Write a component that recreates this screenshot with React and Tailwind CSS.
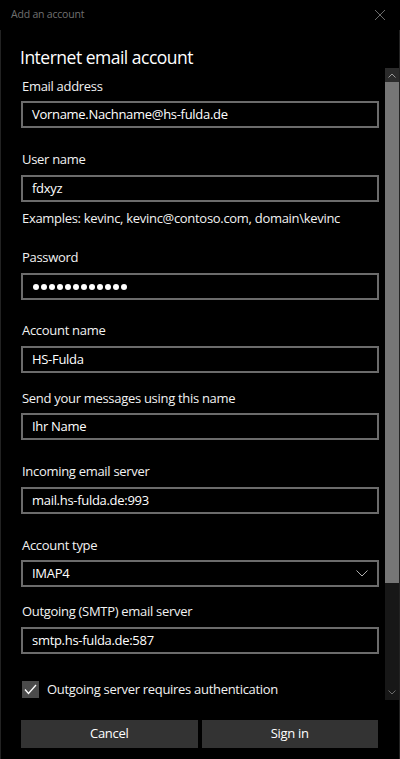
import React from 'react';

const font = { fontFamily: '"Open Sans", "Noto Sans", sans-serif' };

function Label({ children, className = '' }) {
    return (
        <div className={`h-[18px] text-[13px] leading-[18px] tracking-[-0.3px] text-[#f2f2f2] pl-[1px] ${className}`}>
            {children}
        </div>
    );
}

function Field({ value, className = '' }) {
    return (
        <div className={`h-[27px] border-2 border-[#6b6b6b] flex items-center pl-[9px] text-[13px] tracking-[-0.3px] text-white ${className}`}>
            {value}
        </div>
    );
}

export default function App() {
    return (
        <div className="w-[400px] h-[759px] bg-black flex flex-col overflow-hidden" style={font}>
            {/* title bar */}
            <div className="h-[30px] flex items-center justify-between pl-[11px] pr-[14px]">
                <span className="text-[10.5px] tracking-[-0.2px] text-[#707070]">Add an account</span>
                <svg width="12" height="12" viewBox="0 0 12 12" className="text-[#6a6a6a]">
                    <path d="M1 1L11 11M11 1L1 11" stroke="currentColor" strokeWidth="1" />
                </svg>
            </div>

            <div className="flex-1 flex flex-col border-l border-r border-[#222]">
                <div className="flex">
                    {/* form */}
                    <div className="w-[378px] pl-[20px] flex flex-col">
                        <h1 className="mt-[14px] h-[26px] text-[17.5px] leading-[26px] tracking-[-0.5px] text-white -ml-[1px]">Internet email account</h1>

                        <Label className="mt-[7px]">Email address</Label>
                        <Field className="mt-[6px]" value="Vorname.Nachname@hs-fulda.de" />

                        <Label className="mt-[22px]">User name</Label>
                        <Field className="mt-[7px]" value="fdxyz" />
                        <Label className="mt-[7px]">Examples: kevinc, kevinc@contoso.com, domain\kevinc</Label>

                        <Label className="mt-[21px]">Password</Label>
                        <div className="mt-[7px] h-[27px] border-2 border-[#6b6b6b] flex items-center gap-[2px] pl-[10px]">
                            {Array.from({ length: 12 }).map((_, i) => (
                                <span key={i} className="w-[6px] h-[6px] rounded-full bg-white" />
                            ))}
                        </div>

                        <Label className="mt-[21px]">Account name</Label>
                        <Field className="mt-[7px]" value="HS-Fulda" />

                        <Label className="mt-[16px]">Send your messages using this name</Label>
                        <Field className="mt-[6px]" value="Ihr Name" />

                        <Label className="mt-[22px]">Incoming email server</Label>
                        <Field className="mt-[7px]" value="mail.hs-fulda.de:993" />

                        <Label className="mt-[22px]">Account type</Label>
                        <div className="mt-[6px] h-[27px] border-2 border-[#6b6b6b] flex items-center justify-between pl-[9px] pr-[9px] text-[13px] tracking-[-0.3px] text-white">
                            <span>IMAP4</span>
                            <svg width="12" height="7" viewBox="0 0 12 7" className="text-[#b0b0b0]">
                                <path d="M0.5 0.5L6 6L11.5 0.5" stroke="currentColor" strokeWidth="1" fill="none" />
                            </svg>
                        </div>

                        <Label className="mt-[15px]">Outgoing (SMTP) email server</Label>
                        <Field className="mt-[7px]" value="smtp.hs-fulda.de:587" />

                        <div className="mt-[26px] flex items-center gap-[8px] pl-[1px]">
                            <div className="w-[17px] h-[17px] bg-[#4a4a4a] flex items-center justify-center">
                                <svg width="13" height="11" viewBox="0 0 13 11">
                                    <path d="M1 5.5L4.5 9.5L12 1" stroke="white" strokeWidth="1.3" fill="none" />
                                </svg>
                            </div>
                            <span className="text-[13px] tracking-[-0.3px] text-[#f2f2f2]">Outgoing server requires authentication</span>
                        </div>
                    </div>

                    {/* scrollbar */}
                    <div className="ml-[6px] mt-[38px] w-[14px] h-[632px] flex flex-col bg-[#171717]">
                        <div className="h-[14px] bg-[#2b2b2b] flex items-center justify-center">
                            <svg width="8" height="5" viewBox="0 0 8 5">
                                <path d="M0.5 4.5L4 1L7.5 4.5" stroke="#9a9a9a" strokeWidth="1" fill="none" />
                            </svg>
                        </div>
                        <div className="h-[501px] bg-[#767676]" />
                        <div className="flex-1 flex items-end justify-center pb-[5px]">
                            <svg width="8" height="5" viewBox="0 0 8 5">
                                <path d="M0.5 0.5L4 4L7.5 0.5" stroke="#6a6a6a" strokeWidth="1" fill="none" />
                            </svg>
                        </div>
                    </div>
                </div>

                {/* buttons */}
                <div className="mt-[20px] flex gap-[4px] pl-[20px] pr-[21px]">
                    <button className="flex-1 h-[28px] bg-[#333333] text-[13px] tracking-[-0.3px] text-white">Cancel</button>
                    <button className="flex-1 h-[28px] bg-[#333333] text-[13px] tracking-[-0.3px] text-white">Sign in</button>
                </div>
            </div>
        </div>
    );
}
